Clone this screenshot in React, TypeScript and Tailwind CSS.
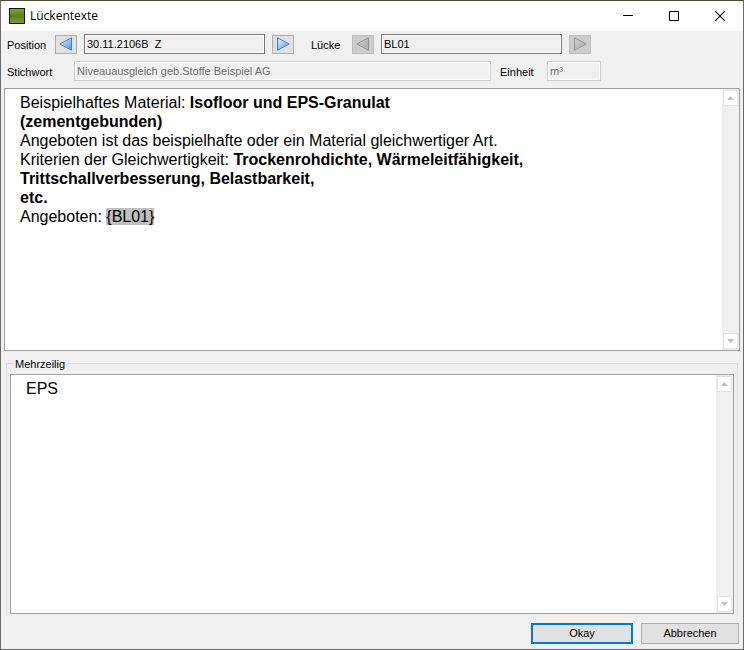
import { useId, useState } from 'react'
import { clsx } from 'clsx'

interface StepButtonProps {
  direction: 'left' | 'right'
  label: string
  disabled?: boolean
}

function StepButton({ direction, label, disabled }: StepButtonProps) {
  const id = useId()
  const isLeft = direction === 'left'
  return (
    <button
      type="button"
      aria-label={label}
      disabled={disabled}
      className={clsx(
        'flex h-[19px] w-[22px] shrink-0 items-center justify-center border',
        disabled ? 'border-[#bfbfbf] bg-[#cccccc]' : 'border-[#adadad] bg-[#e1e1e1]'
      )}
    >
      <svg width="14" height="14" viewBox="0 0 14 14">
        <defs>
          <linearGradient id={id} x1="0" y1="0" x2="1" y2="1">
            <stop offset="0" stopColor={disabled ? '#d0d0d0' : '#e8f5ff'} />
            <stop offset="1" stopColor={disabled ? '#a9a9a9' : '#4f96e2'} />
          </linearGradient>
        </defs>
        <path
          d={isLeft ? 'M12.5 .8V13.2L.8 7Z' : 'M1.5 .8V13.2L13.2 7Z'}
          fill={`url(#${id})`}
          stroke={disabled ? '#929292' : '#4a7cc0'}
          strokeLinejoin="round"
        />
      </svg>
    </button>
  )
}

interface FieldProps {
  label: string
  value: string
  labelClass?: string
  inputClass?: string
  disabled?: boolean
}

function Field({ label, value, labelClass, inputClass, disabled }: FieldProps) {
  const id = useId()
  return (
    <>
      <label htmlFor={id} className={clsx('shrink-0 pt-[2px]', labelClass)}>{label}</label>
      <input
        id={id}
        readOnly
        disabled={disabled}
        value={value}
        className={clsx(
          'h-5 min-w-0 border bg-[#f0f0f0] px-[2px] ring-1 ring-white ring-inset outline-none',
          disabled ? 'border-[#cccccc] text-[#6d6d6d]' : 'border-[#7a7a7a]',
          inputClass
        )}
      />
    </>
  )
}

function ScrollBar() {
  return (
    <div className="flex w-[17px] shrink-0 flex-col justify-between bg-[#f0f0f0] p-px">
      {['up', 'down'].map((dir) => (
        <button
          key={dir}
          type="button"
          disabled
          aria-label={dir === 'up' ? 'Nach oben' : 'Nach unten'}
          className="flex h-4 w-[15px] items-center justify-center border border-[#e3e3e3] bg-white"
        >
          <svg width="7" height="4" viewBox="0 0 7 4" className={clsx(dir === 'down' && 'rotate-180')}>
            <path d="M0 4L3.5 0L7 4Z" fill="#bfbfbf" />
          </svg>
        </button>
      ))}
    </div>
  )
}

function TitleBar() {
  return (
    <header className="flex h-[30px] shrink-0 items-center bg-white pl-2">
      <svg width="16" height="16" viewBox="0 0 16 16">
        <defs>
          <linearGradient id="app-icon" x1="0" y1="0" x2="0" y2="1">
            <stop offset="0" stopColor="#86a83a" />
            <stop offset=".5" stopColor="#587f1f" />
            <stop offset="1" stopColor="#7aa02f" />
          </linearGradient>
        </defs>
        <rect x=".5" y=".5" width="15" height="15" fill="url(#app-icon)" stroke="#10180a" />
      </svg>
      <h1 className="ml-[5px] flex-1 font-['Open_Sans','Noto_Sans',sans-serif] text-xs">Lückentexte</h1>
      <button type="button" aria-label="Minimieren" className="flex h-full w-[46px] items-center justify-center">
        <svg width="10" height="10" viewBox="0 0 10 10" stroke="#000"><path d="M0 4.5H10" /></svg>
      </button>
      <button type="button" aria-label="Maximieren" className="flex h-full w-[46px] items-center justify-center">
        <svg width="10" height="10" viewBox="0 0 10 10" stroke="#000" fill="none"><path d="M.5 .5H9.5V9.5H.5Z" /></svg>
      </button>
      <button type="button" aria-label="Schließen" className="flex h-full w-[46px] items-center justify-center">
        <svg width="10" height="10" viewBox="0 0 10 10" stroke="#000" strokeWidth="1.1"><path d="M0 0L10 10M10 0L0 10" /></svg>
      </button>
    </header>
  )
}

function App() {
  const [text, setText] = useState('EPS')

  return (
    <div className="flex h-screen flex-col border border-[#6b6b6b] border-t-[#4d5138] bg-[#f0f0f0] font-['Liberation_Sans',Arial,sans-serif] text-[11px] text-black">
      <TitleBar />

      <div className="flex items-center px-[6px] pt-[3px]">
        <Field label="Position" value="30.11.2106B  Z" labelClass="order-1 w-12" inputClass="order-3 ml-[7px] w-[181px]" />
        <div className="order-2"><StepButton direction="left" label="Vorherige Position" /></div>
        <div className="order-4 ml-[7px]"><StepButton direction="right" label="Nächste Position" /></div>
        <div className="order-5 ml-[17px] flex items-center">
          <Field label="Lücke" value="BL01" labelClass="order-1 w-[41px]" inputClass="order-3 ml-[7px] w-[181px]" />
          <div className="order-2"><StepButton direction="left" label="Vorherige Lücke" disabled /></div>
          <div className="order-4 ml-[7px]"><StepButton direction="right" label="Nächste Lücke" disabled /></div>
        </div>
      </div>

      <div className="mt-[7px] flex items-center px-[6px]">
        <Field label="Stichwort" value="Niveauausgleich geb.Stoffe Beispiel AG" labelClass="w-[67px]" inputClass="w-[417px]" disabled />
        <Field label="Einheit" value="m³" labelClass="ml-[9px] w-[47px]" inputClass="w-[54px]" disabled />
      </div>

      <section className="mx-[3px] mt-[7px] flex min-h-0 flex-[265] border border-[#a0a0a0] bg-white">
        <div className="min-w-0 flex-1 overflow-hidden px-[15px] pt-1 text-base leading-[19px]">
          <p>
            Beispielhaftes Material: <b>Isofloor und EPS-Granulat<br />(zementgebunden)</b>
          </p>
          <p>Angeboten ist das beispielhafte oder ein Material gleichwertiger Art.</p>
          <p>
            Kriterien der Gleichwertigkeit: <b>Trockenrohdichte, Wärmeleitfähigkeit,<br />Trittschallverbesserung, Belastbarkeit,<br />etc.</b>
          </p>
          <p>
            Angeboten: <span className="bg-[#c0c0c0]">{'{BL01}'}</span>
          </p>
        </div>
        <ScrollBar />
      </section>

      <fieldset className="mx-[5px] mt-[6px] flex min-h-0 min-w-0 flex-[257] flex-col border border-b-0 border-[#dcdcdc] px-[3px] pt-[3px] pb-[2px]">
        <legend className="ml-[3px] px-[2px] leading-[14px]">
          <label htmlFor="mehrzeilig">Mehrzeilig</label>
        </legend>
        <div className="flex min-h-0 flex-1 border border-[#a0a0a0] bg-white">
          <textarea
            id="mehrzeilig"
            value={text}
            onChange={(event) => setText(event.target.value)}
            className="min-w-0 flex-1 resize-none overflow-hidden px-[15px] pt-1 text-base leading-[19px] outline-none"
          />
          <ScrollBar />
        </div>
      </fieldset>

      <footer className="mt-[7px] mb-[5px] flex justify-end gap-2 px-1">
        <button type="button" className="h-[21px] w-[102px] border-2 border-[#0078d7] bg-[#e1e1e1]">Okay</button>
        <button type="button" className="h-[21px] w-[98px] border border-[#adadad] bg-[#e1e1e1]">Abbrechen</button>
      </footer>
    </div>
  )
}

export default App
